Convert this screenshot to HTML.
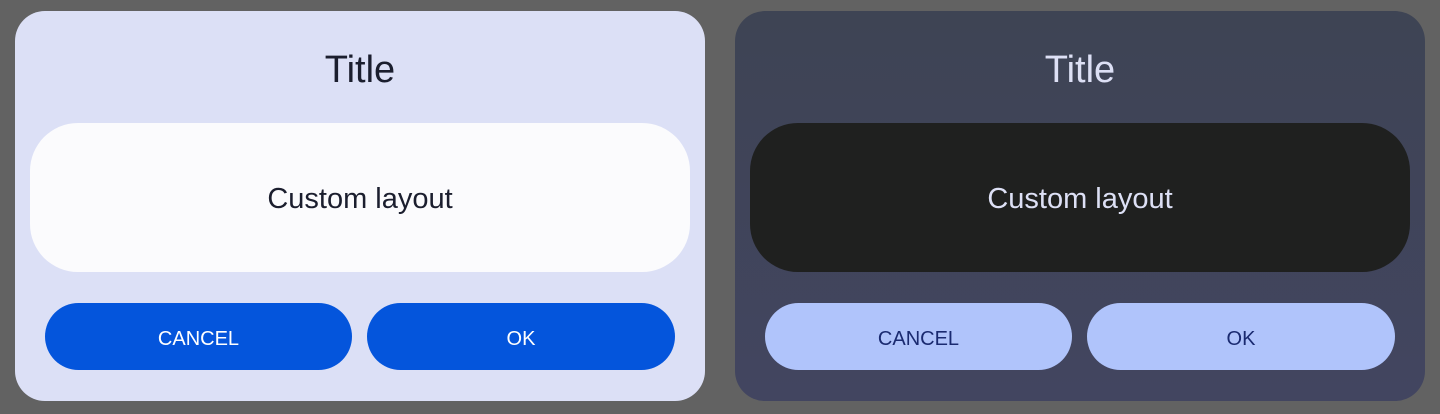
<!DOCTYPE html>
<html><head><style>
body{margin:0;width:1440px;height:414px;background:#626262;position:relative;overflow:hidden;font-family:"Liberation Sans",Roboto,sans-serif}
.card{position:absolute;top:11px;width:690px;height:390px;border-radius:30px}
.t{position:absolute;top:36px;left:0;width:100%;text-align:center;font-size:38px;line-height:46px}
.in{position:absolute;left:15px;top:112px;width:660px;height:149px;border-radius:48px;text-align:center;line-height:153px;font-size:29px}
.b{position:absolute;top:292px;height:67px;width:307px;border-radius:34px;text-align:center;line-height:72px;font-size:20px}
</style></head><body>
<div class="card" style="left:15px;background:#dce0f6">
 <div class="t" style="color:#1b1e2e">Title</div>
 <div class="in" style="background:#fbfbfd;color:#1b1e2e">Custom layout</div>
 <div class="b" style="left:30px;background:#0455dc;color:#fff">CANCEL</div>
 <div class="b" style="left:352px;background:#0455dc;color:#fff;width:308px">OK</div>
</div>
<div class="card" style="left:735px;background:linear-gradient(#3e4454,#424560)">
 <div class="t" style="color:#dde0f5">Title</div>
 <div class="in" style="background:#1f201f;color:#dde0f5">Custom layout</div>
 <div class="b" style="left:30px;background:#b0c4fb;color:#1a2a70">CANCEL</div>
 <div class="b" style="left:352px;background:#b0c4fb;color:#1a2a70;width:308px">OK</div>
</div>
</body></html>
